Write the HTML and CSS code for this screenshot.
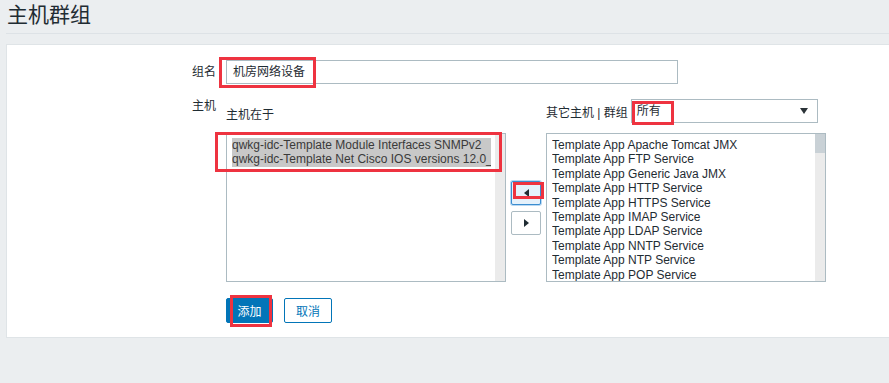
FILE: index.html
```html
<!DOCTYPE html>
<html lang="zh-CN">
<head>
    <meta charset="UTF-8">
    <title>主机群组</title>
    <link rel="stylesheet" href="styles.css">
</head>
<body>
    <div class="wrapper">
        <header class="header">
            <h1>主机群组</h1>
        </header>

        <div class="panel">
            <div class="form">
                <label class="label label-mid">组名</label>
                <div class="field">
                    <div class="input">机房网络设备</div>
                    <span class="mark mark-name"></span>
                </div>

                <label class="label">主机</label>
                <div class="tween">
                    <div class="col">
                        <div class="col-head col-head-left">主机在于</div>
                        <div class="listbox">
                            <div class="list-inner">
                                <div class="opt selected">qwkg-idc-Template Module Interfaces SNMPv2</div>
                                <div class="opt selected">qwkg-idc-Template Net Cisco IOS versions 12.0_3</div>
                            </div>
                            <div class="scroll"></div>
                            <span class="mark mark-list"></span>
                        </div>
                    </div>

                    <div class="moves">
                        <button class="move focused"><span class="tri tri-left"></span><span class="mark mark-move"></span></button>
                        <button class="move"><span class="tri tri-right"></span></button>
                    </div>

                    <div class="col">
                        <div class="col-head">
                            <span>其它主机 | 群组</span>
                            <div class="dropdown">
                                <span>所有</span>
                                <span class="caret"></span>
                                <span class="mark mark-group"></span>
                            </div>
                        </div>
                        <div class="listbox">
                            <div class="list-inner">
                                <div class="opt">Template App Apache Tomcat JMX</div>
                                <div class="opt">Template App FTP Service</div>
                                <div class="opt">Template App Generic Java JMX</div>
                                <div class="opt">Template App HTTP Service</div>
                                <div class="opt">Template App HTTPS Service</div>
                                <div class="opt">Template App IMAP Service</div>
                                <div class="opt">Template App LDAP Service</div>
                                <div class="opt">Template App NNTP Service</div>
                                <div class="opt">Template App NTP Service</div>
                                <div class="opt">Template App POP Service</div>
                            </div>
                            <div class="scroll"><div class="thumb"></div></div>
                        </div>
                    </div>
                </div>

                <div></div>
                <div class="actions">
                    <button class="btn btn-primary">添加<span class="mark mark-add"></span></button>
                    <button class="btn btn-alt">取消</button>
                </div>
            </div>
        </div>
    </div>
</body>
</html>
```

FILE: styles.css
```css
body {
    margin: 0;
    background: #ebeef0;
    color: #1f2c33;
    font-family: "Liberation Sans", "Noto Sans CJK SC", sans-serif;
    font-size: 12px;
}
.wrapper {
    padding-left: 6px;
}
.header {
    height: 33px;
    border-bottom: 1px solid #dde2e6;
}
.header h1 {
    margin: 0;
    padding-left: 1px;
    font-size: 21px;
    font-weight: normal;
    line-height: 29px;
}
.panel {
    margin-top: 10px;
    background: #fff;
    border: 1px solid #dfe4e7;
    border-right: none;
    padding: 15px 0 14px 0;
}
.form {
    display: grid;
    grid-template-columns: 209px 1fr;
    column-gap: 10px;
    row-gap: 15px;
}
.label {
    text-align: right;
    line-height: 14px;
}
.label-mid {
    line-height: 24px;
}
.field {
    position: relative;
    width: 452px;
}
.input {
    box-sizing: border-box;
    height: 24px;
    border: 1px solid #acbbc2;
    padding: 0 6px;
    line-height: 22px;
}
.tween {
    display: flex;
    gap: 5px;
}
.col {
    width: 280px;
}
.col-head {
    height: 24px;
    margin-bottom: 10px;
    display: flex;
    align-items: center;
    gap: 3px;
    white-space: nowrap;
}
.col-head-left {
    padding-top: 4px;
    box-sizing: border-box;
}
.dropdown {
    position: relative;
    box-sizing: border-box;
    width: 187px;
    height: 24px;
    border: 1px solid #acbbc2;
    padding: 0 5px;
    line-height: 22px;
    display: flex;
    justify-content: space-between;
    align-items: center;
}
.caret {
    width: 0;
    height: 0;
    border-left: 4px solid transparent;
    border-right: 4px solid transparent;
    border-top: 6px solid #2b3338;
    margin-right: 4px;
}
.listbox {
    position: relative;
    box-sizing: border-box;
    height: 149px;
    border: 1px solid #acbbc2;
    display: flex;
}
.list-inner {
    flex: 1;
    overflow: hidden;
    padding: 4px 4px 0 5px;
}
.opt {
    height: 14.4px;
    line-height: 14.4px;
    white-space: nowrap;
    overflow: hidden;
}
.opt.selected {
    background: #c8c8c8;
    color: #3a3a3a;
}
.scroll {
    width: 10px;
    background: #ebebeb;
}
.thumb {
    height: 19px;
    background: #c9d1d6;
}
.moves {
    width: 30px;
    padding-top: 82px;
    display: flex;
    flex-direction: column;
    gap: 6px;
}
.move {
    position: relative;
    box-sizing: border-box;
    width: 30px;
    height: 24px;
    padding: 0;
    background: #fff;
    border: 1px solid #acbbc2;
    border-radius: 2px;
    display: flex;
    align-items: center;
    justify-content: center;
}
.move.focused {
    background: #e5f1fb;
    border-color: #3b8dd0;
    box-shadow: 0 0 0 1px #b9d8f2;
}
.tri {
    width: 0;
    height: 0;
    border-top: 4px solid transparent;
    border-bottom: 4px solid transparent;
}
.tri-left {
    border-right: 5px solid #1f2c33;
}
.tri-right {
    border-left: 5px solid #1f2c33;
}
.actions {
    margin-top: 1px;
    display: flex;
    gap: 11px;
}
.btn {
    position: relative;
    box-sizing: border-box;
    height: 25px;
    padding: 0;
    font-family: inherit;
    font-size: 12px;
    white-space: nowrap;
    text-align: center;
    border: 1px solid #0275b8;
    border-radius: 2px;
    cursor: pointer;
}
.btn-primary {
    width: 47px;
    background: #0275b8;
    color: #fff;
}
.btn-alt {
    width: 48px;
    background: #fff;
    color: #0275b8;
}
.mark {
    position: absolute;
    box-sizing: border-box;
    border: 3px solid #ee3340;
    pointer-events: none;
}
.mark-name {
    left: -7px;
    top: -3px;
    width: 97px;
    height: 31px;
}
.mark-list {
    left: -12px;
    top: -2px;
    width: 287px;
    height: 40px;
}
.mark-move {
    left: 1px;
    top: 0;
    width: 31px;
    height: 17px;
}
.mark-group {
    left: 0;
    top: 1px;
    width: 42px;
    height: 24px;
}
.mark-add {
    left: 3px;
    top: -4px;
    width: 42px;
    height: 32px;
}
```
